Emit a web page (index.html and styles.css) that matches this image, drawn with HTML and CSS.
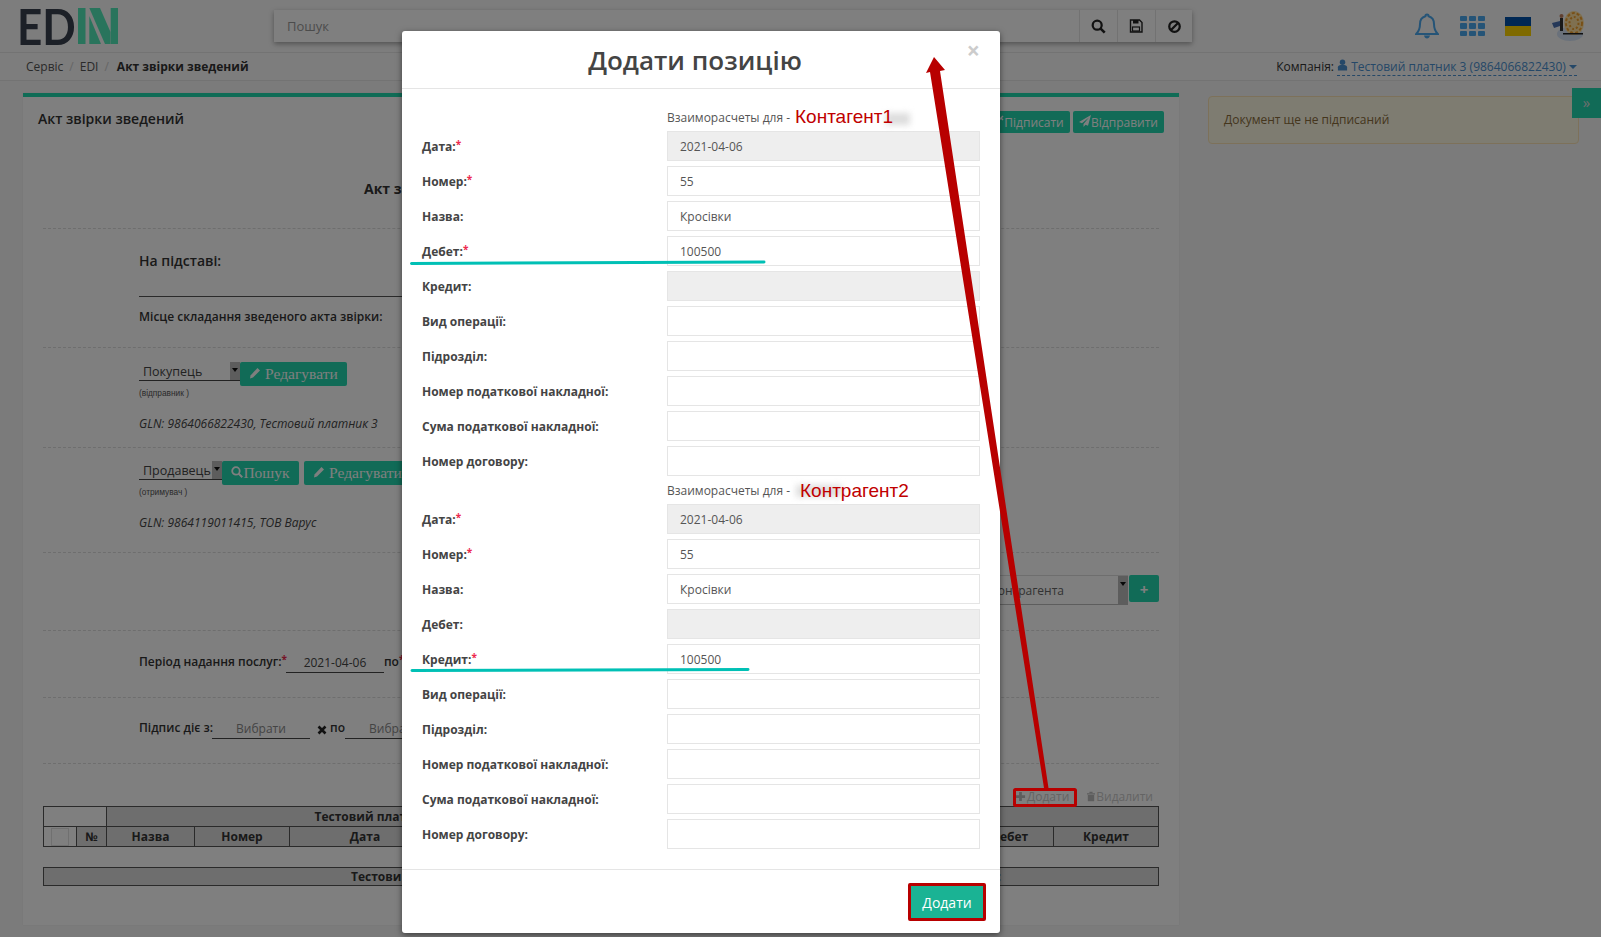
FILE: index.html
```html
<!DOCTYPE html>
<html lang="uk">

<head>
    <meta charset="UTF-8">
    <title>Акт звірки зведений</title>
    <link rel="stylesheet" href="styles.css">
</head>

<body>
    <header class="topbar">
        <a class="logo">
            <span class="logo-text">ED</span>
            <svg class="logo-mark" width="40" height="36" viewBox="0 0 40 36">
                <rect x="0" y="0" width="7.500" height="36" fill="#52e8b8" />
                <polygon points="11.300,8 11.300,36 23,36" fill="#52e8b8" />
                <polygon points="11.300,0 22,0 32.500,24 32.500,36 27,36" fill="#52e8b8" />
                <rect x="32.700" y="0" width="7.300" height="36" fill="#52e8b8" />
            </svg>
        </a>
        <div class="search">
            <span class="search-text">Пошук</span>
            <span class="search-btn">
                <svg width="15" height="15" viewBox="0 0 16 16"><circle cx="6.600" cy="6.600" r="4.800" fill="none" stroke="#222" stroke-width="2.400" /><path d="M10 10l4.600 4.600" stroke="#222" stroke-width="2.800" /></svg>
            </span>
            <span class="search-btn">
                <svg width="14" height="14" viewBox="0 0 14 14"><path d="M1.500 1h9l2.500 2.500V13h-11.500z" fill="none" stroke="#222" stroke-width="1.400" /><rect x="4" y="1" width="5.500" height="3.500" fill="#222" /><rect x="3.500" y="8" width="7" height="4" fill="none" stroke="#222" stroke-width="1.200" /></svg>
            </span>
            <span class="search-btn">
                <svg width="15" height="15" viewBox="0 0 16 16"><circle cx="8" cy="8" r="5.600" fill="none" stroke="#222" stroke-width="2.400" /><path d="M4 12L12 4" stroke="#222" stroke-width="2.400" /></svg>
            </span>
        </div>
        <div class="top-icons">
            <svg class="bell" width="24" height="27" viewBox="0 0 24 27"><path d="M12 1.500c1 0 1.600.7 1.600 1.700 3.600 1 5.400 4 5.400 7.800 0 5 1.300 7.500 3.800 10H1.200C3.700 18.500 5 16 5 11c0-3.800 1.800-6.800 5.400-7.800 0-1 .6-1.700 1.600-1.700z" fill="none" stroke="#4aa8ee" stroke-width="2" /><path d="M9 22.500c.4 2 1.600 3 3 3s2.600-1 3-3z" fill="#4aa8ee" /></svg>
            <span class="apps"><i></i><i></i><i></i><i></i><i></i><i></i><i></i><i></i><i></i></span>
            <span class="flag"></span>
            <svg class="avatar" width="36" height="32" viewBox="0 0 36 32">
                <ellipse cx="20" cy="24" rx="13" ry="7" fill="#d4e2f6" />
                <ellipse cx="24" cy="13" rx="10" ry="12" fill="#ffe0a0" />
                <ellipse cx="24" cy="13" rx="8" ry="10" fill="none" stroke="#f0a030" stroke-width="2" stroke-dasharray="3 2" />
                <ellipse cx="24" cy="13" rx="4.500" ry="6" fill="none" stroke="#f0a030" stroke-width="2" stroke-dasharray="2 2" />
                <rect x="10" y="8" width="3" height="13" fill="#333" />
                <circle cx="11.500" cy="6" r="2" fill="#c08060" />
                <path d="M2 13l8-2v5l-6 2z" fill="#4a70b0" />
                <rect x="13" y="23" width="20" height="1.500" fill="#222" />
            </svg>
        </div>
    </header>

    <nav class="crumbs">
        <span class="crumb">Сервіс</span><span class="sep">/</span>
        <span class="crumb">EDI</span><span class="sep">/</span>
        <b class="crumb-now">Акт звірки зведений</b>
        <span class="company">Компанія:
            <span class="company-link">
                <svg width="11" height="12" viewBox="0 0 12 12"><circle cx="6" cy="3" r="3" fill="#4a90d0" /><path d="M1 12V8.500C1 7 2.500 6 4 6h4c1.500 0 3 1 3 2.500V12z" fill="#4a90d0" /></svg>
                Тестовий платник 3 (9864066822430)
                <span class="caret-blue"></span>
            </span>
        </span>
    </nav>

    <div class="content">
        <main class="panel">
            <div class="panel-head">
                <h2>Акт звірки зведений</h2>
                <div class="panel-actions">
                    <button class="btn btn-sign">
                        <svg width="12" height="12" viewBox="0 0 12 12"><circle cx="3.500" cy="8.500" r="2.500" fill="none" stroke="#fff" stroke-width="1.500" /><path d="M5.500 6.500L11 1M9 3l2 2" stroke="#fff" stroke-width="1.500" /></svg>Підписати
                    </button>
                    <button class="btn btn-send">
                        <svg width="12" height="12" viewBox="0 0 12 12"><path d="M12 0L0 7l3 1.200L10 2.500 4.500 9v3l2-2.300 2.500 1z" fill="#fff" /></svg>Відправити
                    </button>
                </div>
            </div>

            <section class="sec sec-doc"><b>Акт звірки зведений № 55 від 2021-04-06 та інших</b></section>

            <section class="sec sec-basis">
                <div class="basis-label">На підставі:</div>
                <div class="basis-place">Місце складання зведеного акта звірки:</div>
            </section>

            <section class="sec sec-buyer">
                <div class="party-line">
                    <span class="sel sel-buyer">Покупець<span class="sel-arrow"></span></span>
                    <button class="btn btn-serif btn-edit">
                        <svg width="12" height="12" viewBox="0 0 12 12"><path d="M8.500 1l2.500 2.500-7 7L1 11.500l.5-3z" fill="#fff" /></svg>
                        Редагувати
                    </button>
                </div>
                <small class="party-note">(відправник )</small>
                <em class="gln">GLN: 9864066822430, Тестовий платник 3</em>
            </section>

            <section class="sec sec-seller">
                <div class="party-line">
                    <span class="sel sel-seller">Продавець<span class="sel-arrow"></span></span>
                    <button class="btn btn-serif btn-find">
                        <svg width="12" height="12" viewBox="0 0 16 16"><circle cx="6.600" cy="6.600" r="5" fill="none" stroke="#fff" stroke-width="2.400" /><path d="M10 10l5 5" stroke="#fff" stroke-width="2.600" /></svg>Пошук
                    </button>
                    <button class="btn btn-serif btn-edit">
                        <svg width="12" height="12" viewBox="0 0 12 12"><path d="M8.500 1l2.500 2.500-7 7L1 11.500l.5-3z" fill="#fff" /></svg>
                        Редагувати
                    </button>
                </div>
                <small class="party-note">(отримувач )</small>
                <em class="gln">GLN: 9864119011415, ТОВ Варус</em>
            </section>

            <section class="sec sec-contractor">
                <span class="sel-wide">Виберіть контрагента<span class="sel-arrow"></span></span>
                <button class="btn btn-plus">+</button>
            </section>

            <section class="sec sec-period">
                <b>Період надання послуг:<i class="req">*</i></b>
                <span class="date-in">2021-04-06</span>
                <b class="po">по<i class="req">*</i></b>
            </section>

            <section class="sec sec-sign">
                <b>Підпис діє з:</b>
                <span class="date-in date-empty">Вибрати</span>
                <svg class="clear-x" width="10" height="10" viewBox="0 0 10 10"><path d="M1.500 1.500l7 7M8.500 1.500l-7 7" stroke="#222" stroke-width="2.600" /></svg>
                <b class="po-2">по</b>
                <span class="date-in date-empty">Вибрати</span>
            </section>

            <div class="tbl-tools">
                <span class="tool">
                    <svg width="11" height="11" viewBox="0 0 12 12"><path d="M4.500 1h3v3.500H11v3H7.500V11h-3V7.500H1v-3h3.500z" fill="#bbb" /></svg>Додати
                </span>
                <span class="tool">
                    <svg width="8" height="11" viewBox="0 0 10 12"><path d="M0 2h10v1.500H0zM3 0h4v1.500H3zM1 4h8v8H1z" fill="#bbb" /></svg>Видалити
                </span>
            </div>

            <table class="grid">
                <colgroup>
                    <col class="c-check"><col class="c-num"><col class="c-name"><col class="c-numb"><col class="c-date"><col class="c-mid"><col><col class="c-deb"><col class="c-cred">
                </colgroup>
                <tr class="grid-top">
                    <th class="blank" colspan="2"></th>
                    <th class="grid-owner" colspan="4">Тестовий платник 3 (9864066822430)</th>
                    <th colspan="3"></th>
                </tr>
                <tr>
                    <th class="blank-check"><span class="check"></span></th>
                    <th>№</th>
                    <th>Назва</th>
                    <th>Номер</th>
                    <th>Дата</th>
                    <th></th>
                    <th></th>
                    <th>Дебет</th>
                    <th>Кредит</th>
                </tr>
            </table>

            <div class="grid-total"><b>Тестовий платник 3</b><b>:</b></div>
        </main>

        <aside class="side">
            <div class="alert">Документ ще не підписаний</div>
        </aside>
    </div>

    <span class="side-toggle">»</span>

    <div class="backdrop"></div>

    <div class="modal">
        <div class="modal-head">
            <h1>Додати позицію</h1>
            <span class="modal-close">×</span>
        </div>
        <div class="modal-body">
            <p class="caption caption-first">Взаиморасчеты для -</p>
            <div class="row"><label>Дата:<i class="req">*</i></label><span class="field off">2021-04-06</span></div>
            <div class="row"><label>Номер:<i class="req">*</i></label><span class="field">55</span></div>
            <div class="row"><label>Назва:</label><span class="field">Кросівки</span></div>
            <div class="row"><label>Дебет:<i class="req">*</i></label><span class="field">100500</span></div>
            <div class="row"><label>Кредит:</label><span class="field off"></span></div>
            <div class="row"><label>Вид операції:</label><span class="field"></span></div>
            <div class="row"><label>Підрозділ:</label><span class="field"></span></div>
            <div class="row"><label>Номер податкової накладної:</label><span class="field"></span></div>
            <div class="row"><label>Сума податкової накладної:</label><span class="field"></span></div>
            <div class="row"><label>Номер договору:</label><span class="field"></span></div>

            <p class="caption">Взаиморасчеты для -</p>
            <div class="row"><label>Дата:<i class="req">*</i></label><span class="field off">2021-04-06</span></div>
            <div class="row"><label>Номер:<i class="req">*</i></label><span class="field">55</span></div>
            <div class="row"><label>Назва:</label><span class="field">Кросівки</span></div>
            <div class="row"><label>Дебет:</label><span class="field off"></span></div>
            <div class="row"><label>Кредит:<i class="req">*</i></label><span class="field">100500</span></div>
            <div class="row"><label>Вид операції:</label><span class="field"></span></div>
            <div class="row"><label>Підрозділ:</label><span class="field"></span></div>
            <div class="row"><label>Номер податкової накладної:</label><span class="field"></span></div>
            <div class="row"><label>Сума податкової накладної:</label><span class="field"></span></div>
            <div class="row"><label>Номер договору:</label><span class="field"></span></div>
        </div>
        <div class="modal-foot">
            <button class="btn-add">Додати</button>
        </div>
    </div>

    <!-- red and teal marks drawn on top of the screenshot -->
    <span class="smudge smudge-1"></span>
    <span class="smudge smudge-2"></span>
    <span class="note note-1">Контагент1</span>
    <span class="note note-2">Контрагент2</span>
    <svg class="marks" width="1601" height="937" viewBox="0 0 1601 937">
        <path d="M411.500 263.500L764 262" stroke="#00c0b5" stroke-width="3" fill="none" stroke-linecap="round" />
        <path d="M412 670.500L748 669.500" stroke="#00c0b5" stroke-width="3" fill="none" stroke-linecap="round" />
        <polygon points="934,57 945,70 940,71 1048.500,788 1044,788 930,72 926,73" fill="#b80000" />
        <rect x="1014.500" y="789.500" width="61" height="16" rx="1" fill="none" stroke="#b80000" stroke-width="3" />
    </svg>
</body>

</html>
```

FILE: styles.css
```css
* {
    box-sizing: border-box;
}

html,
body {
    margin: 0;
    height: 937px;
    overflow: hidden;
}

body {
    position: relative;
    font-family: "Open Sans", Arial, sans-serif;
    font-size: 12px;
    color: #444;
    background-color: #f6f6f6;
}

button {
    font-family: inherit;
}

/* top bar */
.topbar {
    display: flex;
    align-items: center;
    height: 53px;
    padding-left: 17px;
    border-bottom: 1px solid #e6e6e6;
    background-color: #fafafa;
}

.logo {
    display: flex;
    align-items: center;
    width: 257px;
    height: 52px;
}

.logo-text {
    flex: none;
    margin-right: -6px;
    transform: scaleX(0.88);
    transform-origin: left center;
    font-family: Lato, "Open Sans", sans-serif;
    font-size: 50px;
    font-weight: 700;
    line-height: 52px;
    color: #39414f;
}

.logo-mark {
    flex: none;
}

.search {
    display: flex;
    width: 918px;
    height: 32px;
    background-color: #fff;
    box-shadow: 0 2px 5px rgba(0, 0, 0, 0.35);
}

.search-text {
    flex: 1;
    padding-left: 13px;
    font-size: 13px;
    line-height: 32px;
    color: #999;
}

.search-btn {
    display: flex;
    align-items: center;
    justify-content: center;
    width: 37px;
    margin-left: 1px;
    border-left: 1px solid #e4e4e4;
}

.top-icons {
    display: flex;
    align-items: center;
    margin-left: 223px;
}

.apps {
    display: grid;
    grid-template-columns: repeat(3, 7px);
    grid-template-rows: repeat(3, 5.500px);
    gap: 2px 2px;
    margin-left: 21px;
}

.apps i {
    border-radius: 1px;
    background-color: #4aa8ee;
}

.flag {
    width: 26px;
    height: 19px;
    margin-left: 20px;
    background: linear-gradient(#0050a8 50%, #ffd500 50%);
}

.avatar {
    margin-left: 19px;
}

/* breadcrumbs */
.crumbs {
    display: flex;
    align-items: center;
    height: 28px;
    padding: 0 24px 0 26px;
    border-bottom: 1px solid #e6e6e6;
    background-color: #fafafa;
}

.crumb {
    color: #555;
}

.sep {
    margin: 0 6px;
    color: #ccc;
}

.crumb-now {
    margin-left: 2px;
    color: #333;
}

.company {
    margin-left: auto;
    color: #333;
}

.company-link {
    display: inline-block;
    color: #4a90d0;
    border-bottom: 1px dashed #4a90d0;
}

.caret-blue {
    display: inline-block;
    margin-bottom: 2px;
    border-top: 4px solid #4a90d0;
    border-left: 4px solid transparent;
    border-right: 4px solid transparent;
}

/* main panel */
.content {
    display: flex;
    align-items: flex-start;
    padding: 12px 0 0 23px;
}

.panel {
    width: 1156px;
    height: 832px;
    padding: 0 20px;
    border-top: 4px solid #1fd8ac;
    background-color: #fff;
    box-shadow: 0 0 1px rgba(0, 0, 0, 0.1);
}

.panel-head {
    display: flex;
    justify-content: space-between;
    height: 50px;
    margin: 0 -5px 0 -5px;
    padding-top: 12px;
}

.panel-head h2 {
    margin: 0;
    font-size: 14px;
    font-weight: 600;
    line-height: 20px;
    color: #333;
}

.panel-actions {
    display: flex;
    gap: 3px;
    padding-top: 2px;
}

.btn {
    height: 22px;
    padding: 0;
    border: none;
    border-radius: 2px;
    font-size: 12px;
    white-space: nowrap;
    color: #fff;
    background-color: #22d6ae;
}

.btn-sign {
    width: 84px;
}

.btn-send {
    width: 91px;
}

.sec {
    border-bottom: 1px dashed #ddd;
    padding-left: 96px;
}

.sec-doc {
    height: 82px;
    padding: 32px 0 0 321px;
    font-size: 14px;
    color: #333;
    white-space: nowrap;
}

.sec-basis {
    height: 119px;
    padding-top: 22px;
}

.basis-label {
    width: 300px;
    height: 46px;
    border-bottom: 1px solid #555;
    font-size: 14px;
    font-weight: 600;
    line-height: 20px;
    color: #333;
}

.basis-place {
    padding-top: 11px;
    font-weight: 600;
    color: #333;
}

.sec-buyer {
    height: 100px;
    padding-top: 14px;
}

.sec-seller {
    height: 105px;
    padding-top: 13px;
}

.party-line {
    display: flex;
    align-items: flex-start;
}

.party-line .btn {
    height: 24px;
}

.btn-serif {
    font-family: "Liberation Serif", serif;
    font-size: 15.500px;
    line-height: 24px;
}

.btn-edit {
    width: 107px;
}

.btn-find {
    width: 77px;
    margin-right: 5px;
}

.sel {
    position: relative;
    display: block;
    height: 19px;
    padding-left: 4px;
    border-bottom: 1px solid #444;
    font-size: 12.500px;
    line-height: 20px;
    color: #444;
}

.sel-buyer {
    width: 101px;
}

.sel-seller {
    width: 83px;
}

.sel-arrow {
    position: absolute;
    top: 0;
    right: 0;
    width: 10px;
    height: 18px;
    background-color: #bbb;
}

.sel-arrow::after {
    content: "";
    position: absolute;
    top: 6px;
    left: 2px;
    border-top: 4px solid #111;
    border-left: 3px solid transparent;
    border-right: 3px solid transparent;
}

.party-note {
    display: block;
    margin-top: 2px;
    font-family: "Liberation Sans", Arial, sans-serif;
    font-size: 8.300px;
    color: #555;
}

.gln {
    display: block;
    margin-top: 17px;
    color: #444;
}

.sec-contractor {
    display: flex;
    justify-content: flex-end;
    align-items: flex-start;
    height: 78px;
    padding-top: 22px;
}

.sel-wide {
    position: relative;
    display: block;
    width: 270px;
    height: 30px;
    padding: 6px 0 0 78px;
    border-bottom: 1px solid #bbb;
    border-top: 1px solid #ddd;
    color: #666;
}

.sel-wide .sel-arrow {
    height: 29px;
}

.btn-plus {
    width: 30px;
    height: 27px;
    margin-left: 1px;
    padding: 0;
    font-size: 15px;
    font-weight: 700;
}

.sec-period {
    display: flex;
    align-items: flex-start;
    height: 67px;
    padding-top: 22px;
    color: #333;
}

.sec-period b,
.sec-sign b {
    font-weight: 600;
}

.req {
    font-style: normal;
    font-weight: 700;
    font-size: 10px;
    vertical-align: 3px;
    line-height: 0;
    color: #ed2a4e;
}

.date-in {
    display: block;
    width: 98px;
    height: 20px;
    margin-left: -1px;
    padding-top: 1px;
    border-bottom: 1px solid #444;
    text-align: center;
    color: #444;
}

.date-empty {
    color: #888;
}

.sec-sign {
    display: flex;
    align-items: flex-start;
    height: 66px;
    padding-top: 21px;
    color: #333;
}

.clear-x {
    margin: 6px 3px 0 7px;
}

.po-2 {
    margin-right: 1px;
}

.tbl-tools {
    display: flex;
    justify-content: flex-end;
    gap: 18px;
    height: 42px;
    padding: 24px 6px 0 0;
    color: #c8c8c8;
}

.tool svg {
    margin-right: 1px;
    vertical-align: -1px;
}

.grid {
    width: 1116px;
    table-layout: fixed;
    border-collapse: collapse;
}

.grid th {
    height: 20px;
    padding: 0;
    border: 1px solid #555;
    font-size: 12px;
    color: #333;
    background-color: #ddd;
}

.grid .grid-owner {
    padding-left: 54px;
}

.c-check {
    width: 33px;
}

.c-num {
    width: 30px;
}

.c-name {
    width: 88px;
}

.c-numb {
    width: 95px;
}

.c-date {
    width: 151px;
}

.c-mid {
    width: 254px;
}

.c-deb {
    width: 88px;
}

.c-cred {
    width: 105px;
}

.grid .blank,
.grid .blank-check {
    background-color: #fff;
}

.check {
    display: block;
    width: 18px;
    height: 18px;
    margin-left: 7px;
    border: 1px solid #e0e0e0;
    background-color: #fff;
}

.grid-total {
    display: flex;
    justify-content: space-between;
    width: 1116px;
    height: 19px;
    margin-top: 20px;
    padding: 0 157px 0 307px;
    border: 1px solid #555;
    color: #333;
    background-color: #ddd;
}

/* right column */
.side {
    margin: 3px 0 0 29px;
}

.alert {
    width: 371px;
    height: 48px;
    padding: 14px 15px;
    border: 1px solid #fae3b5;
    border-radius: 4px;
    color: #8a6d3b;
    background-color: #fcf8e3;
}

.side-toggle {
    position: absolute;
    top: 88px;
    left: 1572px;
    width: 29px;
    height: 30px;
    font-size: 15px;
    line-height: 28px;
    text-align: center;
    color: #ddd;
    background-color: #22d6ae;
}

/* modal */
.backdrop {
    position: absolute;
    inset: 0;
    background-color: rgba(0, 0, 0, 0.5);
}

.modal {
    position: absolute;
    top: 31px;
    left: 402px;
    width: 598px;
    height: 902px;
    border-radius: 3px;
    background-color: #fff;
    box-shadow: 0 2px 6px rgba(0, 0, 0, 0.5);
}

.modal-head {
    position: relative;
    height: 58px;
    padding-right: 12px;
    border-bottom: 1px solid #e5e5e5;
    text-align: center;
}

.modal-head h1 {
    margin: 0;
    font-size: 26px;
    font-weight: 600;
    line-height: 59px;
    color: #444;
}

.modal-close {
    position: absolute;
    top: 3px;
    right: 20px;
    font-size: 23px;
    font-weight: 700;
    color: #ccc;
}

.modal-body {
    height: 781px;
    padding: 0 20px;
    border-bottom: 1px solid #e5e5e5;
}

.caption {
    height: 23px;
    margin: 0 0 0 245px;
    padding-top: 1px;
    color: #555;
}

.caption-first {
    height: 42px;
    padding-top: 20px;
}

.row {
    display: flex;
    align-items: center;
    height: 30px;
    margin-bottom: 5px;
}

.row label {
    width: 245px;
    font-weight: 700;
    color: #444;
}

.field {
    width: 313px;
    height: 30px;
    padding-left: 12px;
    border: 1px solid #e5e5e5;
    line-height: 30px;
    color: #555;
}

.field.off {
    background-color: #eee;
}

.modal-foot {
    display: flex;
    justify-content: flex-end;
    padding: 13px 14px 0 0;
}

.btn-add {
    width: 78px;
    height: 38px;
    border: 3px solid #b80000;
    border-radius: 2px;
    font-size: 14px;
    color: #fff;
    background-color: #1ab394;
}

/* annotations over the picture */
.marks {
    position: absolute;
    top: 0;
    left: 0;
}

.note {
    position: absolute;
    font-family: "Liberation Sans", Arial, sans-serif;
    font-size: 19px;
    line-height: 20px;
    color: #c00000;
}

.note-1 {
    top: 107px;
    left: 795px;
}

.note-2 {
    top: 481px;
    left: 800px;
}

.smudge {
    position: absolute;
    height: 12px;
    background-color: #ddd;
    filter: blur(3px);
}

.smudge-1 {
    top: 113px;
    left: 886px;
    width: 24px;
}

.smudge-2 {
    top: 485px;
    left: 796px;
    width: 46px;
}
```
